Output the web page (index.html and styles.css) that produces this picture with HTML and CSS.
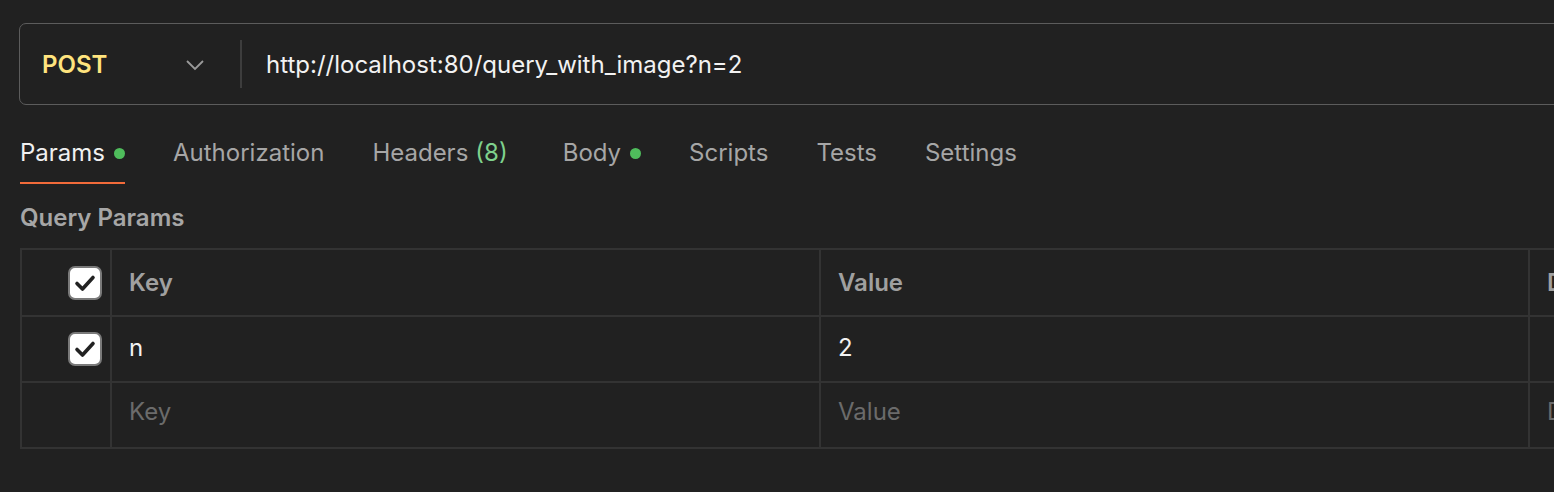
FILE: index.html
```html
<!DOCTYPE html>
<html>
<head>
<meta charset="utf-8">
<link rel="stylesheet" href="styles.css">
</head>
<body>
<div class="page">
  <div class="urlbar">
    <div class="method">
      <span class="method-name">POST</span>
      <svg class="chev" width="20" height="12" viewBox="0 0 20 12"><path d="M2 2 L10 10 L18 2" fill="none" stroke="#9a9a9a" stroke-width="1.8"/></svg>
    </div>
    <div class="divider"></div>
    <div class="url">http://localhost:80/query_with_image?n=2</div>
  </div>

  <div class="tabs">
    <div class="tab active">Params<span class="dot"></span></div>
    <div class="tab">Authorization</div>
    <div class="tab">Headers <span class="count">(8)</span></div>
    <div class="tab">Body<span class="dot"></span></div>
    <div class="tab">Scripts</div>
    <div class="tab">Tests</div>
    <div class="tab">Settings</div>
  </div>

  <div class="section-title">Query Params</div>

  <div class="table">
    <div class="row head">
      <div class="cell check"><span class="cb"><svg width="22" height="18" viewBox="0 0 22 18"><path d="M3 9.5 L8.5 15 L19 3.5" fill="none" stroke="#222" stroke-width="3.6" stroke-linecap="round" stroke-linejoin="round"/></svg></span></div>
      <div class="cell col">Key</div>
      <div class="cell col">Value</div>
      <div class="cell col">Description</div>
    </div>
    <div class="row filled">
      <div class="cell check"><span class="cb"><svg width="22" height="18" viewBox="0 0 22 18"><path d="M3 9.5 L8.5 15 L19 3.5" fill="none" stroke="#222" stroke-width="3.6" stroke-linecap="round" stroke-linejoin="round"/></svg></span></div>
      <div class="cell col val">n</div>
      <div class="cell col val">2</div>
      <div class="cell col val"></div>
    </div>
    <div class="row empty">
      <div class="cell check"></div>
      <div class="cell col ph">Key</div>
      <div class="cell col ph">Value</div>
      <div class="cell col ph">Description</div>
    </div>
  </div>
</div>
</body>
</html>
```

FILE: styles.css
```css
html, body {
  margin: 0;
  padding: 0;
  background: #212121;
  overflow: hidden;
  height: 492px;
}
body {
  font-family: Inter, "Noto Sans", sans-serif;
  color: #e6e6e6;
}
.page {
  width: 2400px;
  padding: 23px 0 0 19px;
}
.urlbar {
  display: flex;
  align-items: center;
  height: 80px;
  border: 1px solid #5c5c5c;
  border-radius: 7px;
  width: 2000px;
}
.method {
  display: flex;
  align-items: center;
  justify-content: space-between;
  width: 163px;
  padding-left: 22px;
  padding-right: 35px;
  box-sizing: content-box;
}
.method-name {
  color: #ffe47e;
  font-weight: 600;
  font-size: 24px;
}
.chev {
  display: block;
  margin-top: 2px;
}
.divider {
  width: 2px;
  height: 48px;
  background: #3d3d3d;
}
.url {
  padding-left: 24px;
  font-size: 24px;
  color: #f2f2f2;
}
.tabs {
  display: flex;
  margin-top: 24px;
  height: 55px;
}
.tab {
  display: flex;
  align-items: flex-start;
  font-size: 24px;
  line-height: 29px;
  color: #a6a6a6;
  margin-right: 48px;
  height: 55px;
  padding-top: 9px;
  box-sizing: border-box;
}
.tab.active {
  color: #f0f0f0;
  border-bottom: 2px solid #f26b3a;
  margin-left: 1px;
}
.dot {
  width: 11px;
  height: 11px;
  border-radius: 50%;
  background: #4fbd5c;
  margin-left: 9px;
  margin-top: 10px;
}
.count {
  color: #7fd18d;
  margin-left: 7px;
  padding-right: 7px;
}
.section-title {
  font-size: 24px;
  line-height: 29px;
  font-weight: 600;
  color: #a6a6a6;
  margin-left: 1px;
  margin-top: 19px;
}
.table {
  margin-top: 16px;
  margin-left: 1px;
  border-top: 2px solid #333;
  border-left: 2px solid #333;
  width: 2300px;
}
.row {
  display: flex;
  height: 66px;
  border-bottom: 2px solid #333;
  box-sizing: border-box;
}
.row.head { height: 67px; }
.cell {
  display: flex;
  align-items: center;
  flex-shrink: 0;
  border-right: 2px solid #333;
  box-sizing: border-box;
  font-size: 24px;
}
.check {
  width: 90px;
  justify-content: flex-end;
  padding-right: 8px;
}
.col {
  width: 709px;
  padding-left: 17px;
}
.head .col {
  font-weight: 600;
  color: #a0a0a0;
}
.filled .col { padding-bottom: 4px; }
.empty .col { padding-bottom: 8px; }
.val { color: #f2f2f2; }
.ph { color: #6b6b6b; }
.cb {
  width: 34px;
  height: 34px;
  box-sizing: border-box;
  background: #fff;
  border: 2px solid #7a7a7a;
  border-radius: 7px;
  display: flex;
  align-items: center;
  justify-content: center;
}
.cb svg { display: block; }
```
